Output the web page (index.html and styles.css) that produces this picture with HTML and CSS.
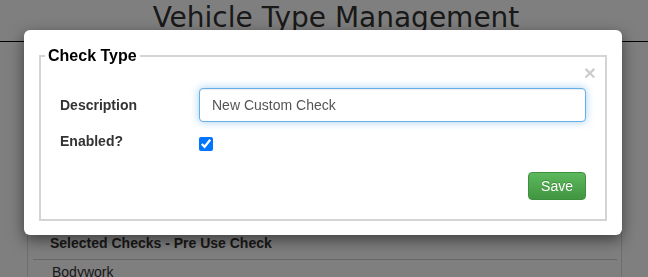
FILE: index.html
```html
<!DOCTYPE html>
<html lang="en">
<head>
  <meta charset="UTF-8">
  <meta name="viewport" content="width=device-width, initial-scale=1.0">
  <title>Vehicle Type Management</title>
  <link rel="stylesheet" href="styles.css">
</head>
<body>
  <div class="page-header">
    <h1>Vehicle Type Management</h1>
  </div>

  <div class="panel">
    <div class="panel-heading">Selected Checks - Pre Use Check</div>
    <ul class="check-list">
      <li>Bodywork</li>
    </ul>
  </div>

  <div class="modal-backdrop"></div>

  <div class="modal">
    <fieldset class="check-type">
      <legend>Check Type</legend>
      <div class="close-row">
        <span class="close">&times;</span>
      </div>
      <div class="form-row">
        <label class="form-label" for="description">Description</label>
        <input type="text" id="description" class="form-control" value="New Custom Check">
      </div>
      <div class="form-row form-row-check">
        <label class="form-label" for="enabled">Enabled?</label>
        <input type="checkbox" id="enabled" class="form-check" checked>
      </div>
      <div class="form-actions">
        <button class="btn-save">Save</button>
      </div>
    </fieldset>
  </div>
</body>
</html>
```

FILE: styles.css
```css
body {
  margin: 0;
  font-family: "Liberation Sans", Arial, sans-serif;
  font-size: 14px;
  color: #333;
  background-color: #fff;
}
.page-header {
  padding-bottom: 7px;
  border-bottom: 1px solid #000;
}
.page-header h1 {
  margin: 2px 0 0;
  padding-left: 24px;
  text-align: center;
  font-family: "DejaVu Sans", Verdana, sans-serif;
  font-size: 28px;
  font-weight: normal;
  line-height: 32px;
  color: #333;
}
.panel {
  width: 593px;
  margin: 189px 0 0 27px;
  border: 1px solid #ddd;
  border-bottom: none;
}
.panel-heading {
  padding: 1px 22px 6px;
  font-weight: bold;
  line-height: 20px;
}
.check-list {
  list-style: none;
  margin: 0 4px 0 5px;
  padding: 0;
  border-top: 1px solid #ccc;
}
.check-list li {
  padding: 2px 19px 0;
  line-height: 20px;
}

/* modal */
.modal-backdrop {
  position: fixed;
  top: 0;
  left: 0;
  right: 0;
  bottom: 0;
  background-color: rgba(0, 0, 0, 0.5);
}
.modal {
  position: fixed;
  top: 30px;
  left: 24px;
  width: 568px;
  padding: 17px 15px 14px;
  background-color: #fff;
  border-radius: 6px;
  box-shadow: 0 5px 15px rgba(0, 0, 0, 0.5);
}
.check-type {
  margin: 0;
  padding: 0 19px 19px;
  border: 2px solid #d4d4d4;
}
.check-type legend {
  margin-left: -15px;
  padding: 0 3px;
  font-size: 16px;
  font-weight: bold;
  line-height: 18px;
  color: #000;
}
.close-row {
  display: flex;
  justify-content: flex-end;
  margin-right: -10px;
}
.close {
  font-size: 21px;
  font-weight: bold;
  line-height: 15px;
  color: #000;
  opacity: 0.2;
  cursor: pointer;
}
.form-row {
  display: flex;
  align-items: center;
  margin-top: 8px;
}
.form-row-check {
  align-items: flex-start;
  margin-top: 9px;
}
.form-label {
  width: 139px;
  flex-shrink: 0;
  font-weight: bold;
  line-height: 20px;
}
.form-control {
  flex: 1;
  box-sizing: border-box;
  height: 34px;
  padding: 6px 12px;
  font-family: inherit;
  font-size: 14px;
  color: #555;
  border: 1px solid #66afe9;
  border-radius: 4px;
  outline: none;
  box-shadow: inset 0 1px 1px rgba(0, 0, 0, 0.075), 0 0 8px rgba(102, 175, 233, 0.6);
}
.form-check {
  width: 14px;
  height: 14px;
  margin: 6px 0 0;
}
.form-actions {
  display: flex;
  justify-content: flex-end;
  margin-top: 21px;
}
.btn-save {
  padding: 3px 12px;
  font-family: inherit;
  font-size: 14px;
  line-height: 20px;
  color: #fff;
  text-shadow: 0 -1px 0 rgba(0, 0, 0, 0.2);
  background-image: linear-gradient(to bottom, #5cb85c 0%, #419641 100%);
  border: 1px solid #3e8f3e;
  border-radius: 4px;
  cursor: pointer;
}
```
